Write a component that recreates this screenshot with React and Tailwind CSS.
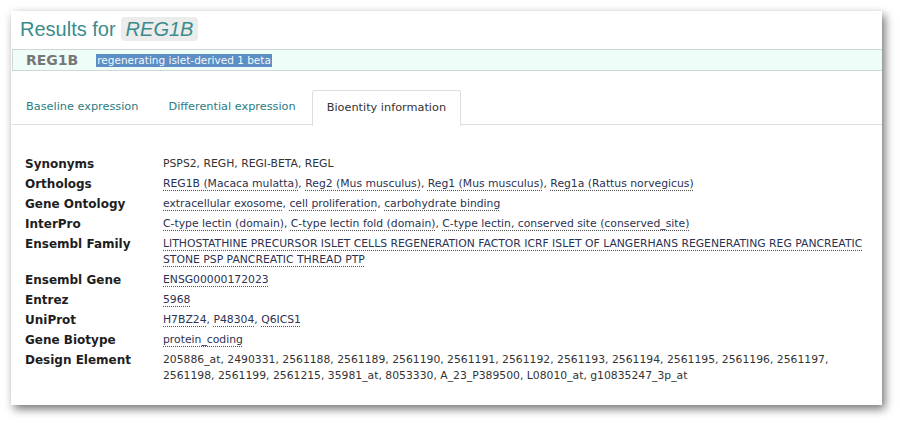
import React from "react";

const rows = [
  { label: "Synonyms", plain: "PSPS2, REGH, REGI-BETA, REGL" },
  {
    label: "Orthologs",
    links: ["REG1B (Macaca mulatta)", "Reg2 (Mus musculus)", "Reg1 (Mus musculus)", "Reg1a (Rattus norvegicus)"],
  },
  { label: "Gene Ontology", links: ["extracellular exosome", "cell proliferation", "carbohydrate binding"] },
  {
    label: "InterPro",
    links: ["C-type lectin (domain)", "C-type lectin fold (domain)", "C-type lectin, conserved site (conserved_site)"],
  },
  {
    label: "Ensembl Family",
    links: [
      "LITHOSTATHINE PRECURSOR ISLET CELLS REGENERATION FACTOR ICRF ISLET OF LANGERHANS REGENERATING REG PANCREATIC STONE PSP PANCREATIC THREAD PTP",
    ],
  },
  { label: "Ensembl Gene", links: ["ENSG00000172023"] },
  { label: "Entrez", links: ["5968"] },
  { label: "UniProt", links: ["H7BZ24", "P48304", "Q6ICS1"] },
  { label: "Gene Biotype", links: ["protein_coding"] },
  {
    label: "Design Element",
    plain:
      "205886_at, 2490331, 2561188, 2561189, 2561190, 2561191, 2561192, 2561193, 2561194, 2561195, 2561196, 2561197, 2561198, 2561199, 2561215, 35981_at, 8053330, A_23_P389500, L08010_at, g10835247_3p_at",
  },
];

function Value({ row }) {
  if (row.plain) return <span className="text-[#333]">{row.plain}</span>;
  return (
    <span>
      {row.links.map((l, i) => (
        <React.Fragment key={i}>
          <a className="text-[#2b3252] underline decoration-dotted decoration-[#555] underline-offset-[3px]">{l}</a>
          {i < row.links.length - 1 ? <span className="text-[#333]">, </span> : null}
        </React.Fragment>
      ))}
    </span>
  );
}

export default function App() {
  const tabs = ["Baseline expression", "Differential expression", "Bioentity information"];

  return (
    <div className="w-[900px] h-[424px] bg-white pt-[11px] pl-[11px] font-['DejaVu_Sans',sans-serif]">
      <div className="w-[871px] h-[394px] bg-white flex flex-col shadow-[3px_4px_9px_rgba(0,0,0,0.55)]">
        <div className="flex items-center mt-[6px] ml-[9px] h-[24px]">
          <span className="font-['Liberation_Sans',sans-serif] text-[20px] text-[#3a8c8c] leading-none">Results for</span>
          <span className="ml-[5px] px-[5px] h-[24px] flex items-center rounded-[4px] bg-[#ececec] font-['Liberation_Sans',sans-serif] italic text-[20px] text-[#3a8c8c] leading-none">
            REG1B
          </span>
        </div>

        <div className="mt-[8px] ml-[1px] h-[22px] flex items-center border border-r-0 border-[#cfd6d4] bg-[#effdf9]">
          <span className="ml-[13px] font-bold text-[14px] text-[#777]">REG1B</span>
          <span className="ml-[18px] px-[1px] bg-[#5b8ec5] text-[#f4f7fb] text-[10.5px] leading-[13px]">
            regenerating islet-derived 1 beta
          </span>
        </div>

        <div className="mt-[19px] ml-[1px] flex h-[35px] border-b border-[#dedede]">
          {tabs.map((t, i) => {
            const active = i === 2;
            return (
              <div
                key={t}
                className={`mr-[2px] px-[14px] flex items-center text-[11.3px] ${
                  active
                    ? "border border-b-0 border-[#dedede] rounded-t-[3px] bg-white text-[#333] -mb-px h-[36px]"
                    : "text-[#2a7c82]"
                }`}
              >
                {t}
              </div>
            );
          })}
        </div>

        <div className="mt-[29px] ml-[14px] mr-[12px]">
          {rows.map((r) => (
            <div key={r.label} className="flex py-[2px]">
              <div className="w-[138px] shrink-0 font-bold text-[12px] leading-[16px] text-[#1e1e1e]">{r.label}</div>
              <div className="flex-1 text-[10.8px] leading-[16px]">
                <Value row={r} />
              </div>
            </div>
          ))}
        </div>
      </div>
    </div>
  );
}
